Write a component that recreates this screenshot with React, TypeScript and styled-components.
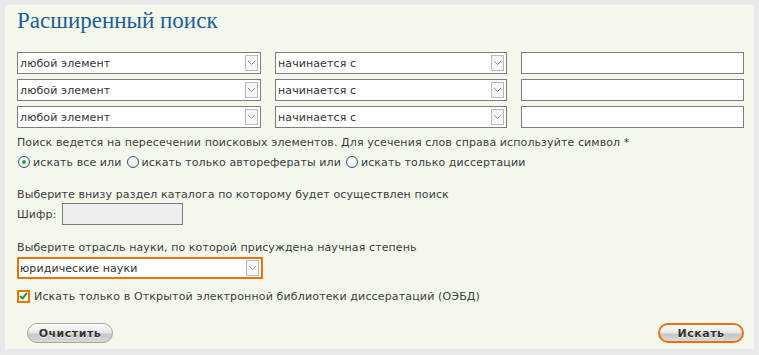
import React from "react";
import styled, { createGlobalStyle } from "styled-components";

const Global = createGlobalStyle`
  html, body { margin: 0; padding: 0; background: #e6eaea; }
  body { font-family: "DejaVu Sans", Verdana, sans-serif; }
`;

const Panel = styled.div`
  margin: 5px;
  width: 749px;
  height: 344px;
  box-sizing: border-box;
  background: #f4f8ec;
  padding: 0 10px 0 12px;
  display: flex;
  flex-direction: column;
  color: #3c3c3c;
  font-size: 11px;
  letter-spacing: 0.1px;
`;

const Title = styled.h1`
  margin: 0;
  height: 47px;
  padding-top: 1px;
  box-sizing: border-box;
  font-family: "Liberation Serif", "Times New Roman", serif;
  font-weight: normal;
  font-size: 23px;
  letter-spacing: 0;
  line-height: 30px;
  color: #1b5e98;
`;

const Grid = styled.div`
  display: grid;
  grid-template-columns: 244px 232px 223px;
  column-gap: 14px;
  row-gap: 5px;
  grid-auto-rows: 22px;
`;

const SelectBox = styled.div<{ $accent?: boolean; $w?: number }>`
  box-sizing: border-box;
  height: 22px;
  ${(p) => (p.$w ? `width: ${p.$w}px;` : "")}
  background: #fff;
  border: ${(p) => (p.$accent ? "2px solid #e8720c" : "1px solid #7d7d7d")};
  display: flex;
  align-items: center;
  padding-left: ${(p) => (p.$accent ? 1 : 2)}px;
  padding-right: 2px;
  font-size: 11px;
  color: #333;
`;

const SelectText = styled.span`
  flex: 1;
  white-space: nowrap;
`;

const Arrow = styled.span`
  width: 13px;
  height: 16px;
  box-sizing: border-box;
  border: 1px solid #b9b9b9;
  background: #f6f6f6;
  display: flex;
  align-items: center;
  justify-content: center;
`;

const TextInput = styled.div<{ $w?: number; $grey?: boolean; $ml?: number }>`
  box-sizing: border-box;
  height: 22px;
  ${(p) => (p.$w ? `width: ${p.$w}px;` : "")}
  margin-left: ${(p) => p.$ml ?? 0}px;
  background: ${(p) => (p.$grey ? "#eeeeee" : "#fff")};
  border: 1px solid #7d7d7d;
`;

const Line = styled.div<{ $mt?: number }>`
  margin-top: ${(p) => p.$mt ?? 0}px;
  height: 20px;
  display: flex;
  align-items: center;
  white-space: nowrap;
`;

const Radio = styled.span<{ $on?: boolean }>`
  width: 10px;
  height: 10px;
  border-radius: 50%;
  border: 1px solid #2e5878;
  background: radial-gradient(circle at 40% 40%, #ffffff, #dfe6ee);
  display: inline-flex;
  align-items: center;
  justify-content: center;
  margin-right: 3px;
  margin-left: 1px;
  &::after {
    content: "";
    width: 4px;
    height: 4px;
    border-radius: 50%;
    background: ${(p) => (p.$on ? "#2fa32f" : "transparent")};
  }
`;

const Gap = styled.span`
  width: 4px;
`;

const Check = styled.span`
  width: 13px;
  height: 13px;
  box-sizing: border-box;
  border: 2px solid #e8720c;
  background: #fff;
  display: inline-flex;
  align-items: center;
  justify-content: center;
  margin-right: 4px;
`;

const CheckLabel = styled.span`
  font-size: 11px;
  letter-spacing: 0.15px;
`;

const Buttons = styled.div`
  margin-top: 17px;
  display: flex;
  justify-content: space-between;
  padding-left: 10px;
`;

const Button = styled.button<{ $accent?: boolean }>`
  width: 86px;
  height: 20px;
  box-sizing: border-box;
  border-radius: 10px;
  border: ${(p) => (p.$accent ? "2px solid #e8720c" : "1px solid #a5a5a5")};
  background: linear-gradient(#fbfbfb 0%, #e9e9e9 45%, #c6c6c6 60%, #dadada 100%);
  font-family: "DejaVu Sans", Verdana, sans-serif;
  font-weight: bold;
  font-size: 11px;
  letter-spacing: 0.5px;
  color: #333;
  text-shadow: 0 1px 0 #fff;
  padding: 0;
  cursor: pointer;
`;

const ArrowIcon = () => (
  <Arrow>
    <svg width="9" height="6" viewBox="0 0 9 6">
      <path d="M1 1 L4.5 4.5 L8 1" fill="none" stroke="#9a9a9a" strokeWidth="1" />
    </svg>
  </Arrow>
);

const Select = ({ text, accent, w }: { text: string; accent?: boolean; w?: number }) => (
  <SelectBox $accent={accent} $w={w}>
    <SelectText>{text}</SelectText>
    <ArrowIcon />
  </SelectBox>
);

export default function App() {
  const rows = [0, 1, 2];
  return (
    <>
      <Global />
      <Panel>
        <Title>Расширенный поиск</Title>
        <Grid>
          {rows.map((r) => (
            <React.Fragment key={r}>
              <Select text="любой элемент" />
              <Select text="начинается с" />
              <TextInput />
            </React.Fragment>
          ))}
        </Grid>
        <Line $mt={4}>
          Поиск ведется на пересечении поисковых элементов. Для усечения слов справа используйте символ *
        </Line>
        <Line>
          <Radio $on />
          искать все или<Gap />
          <Radio />
          искать только авторефераты или<Gap />
          <Radio />
          искать только диссертации
        </Line>
        <Line $mt={12}>Выберите внизу раздел каталога по которому будет осуществлен поиск</Line>
        <Line>
          Шифр:&nbsp;
          <TextInput $w={121} $grey $ml={2} />
        </Line>
        <Line $mt={13}>Выберите отрасль науки, по которой присуждена научная степень</Line>
        <Select text="юридические науки" accent w={246} />
        <Line $mt={7}>
          <Check>
            <svg width="9" height="8" viewBox="0 0 9 8">
              <path d="M1 4 L3.5 6.5 L8 1" fill="none" stroke="#1f9a1f" strokeWidth="2" />
            </svg>
          </Check>
          <CheckLabel>Искать только в Открытой электронной библиотеки диссератаций (ОЭБД)</CheckLabel>
        </Line>
        <Buttons>
          <Button>Очистить</Button>
          <Button $accent>Искать</Button>
        </Buttons>
      </Panel>
    </>
  );
}
